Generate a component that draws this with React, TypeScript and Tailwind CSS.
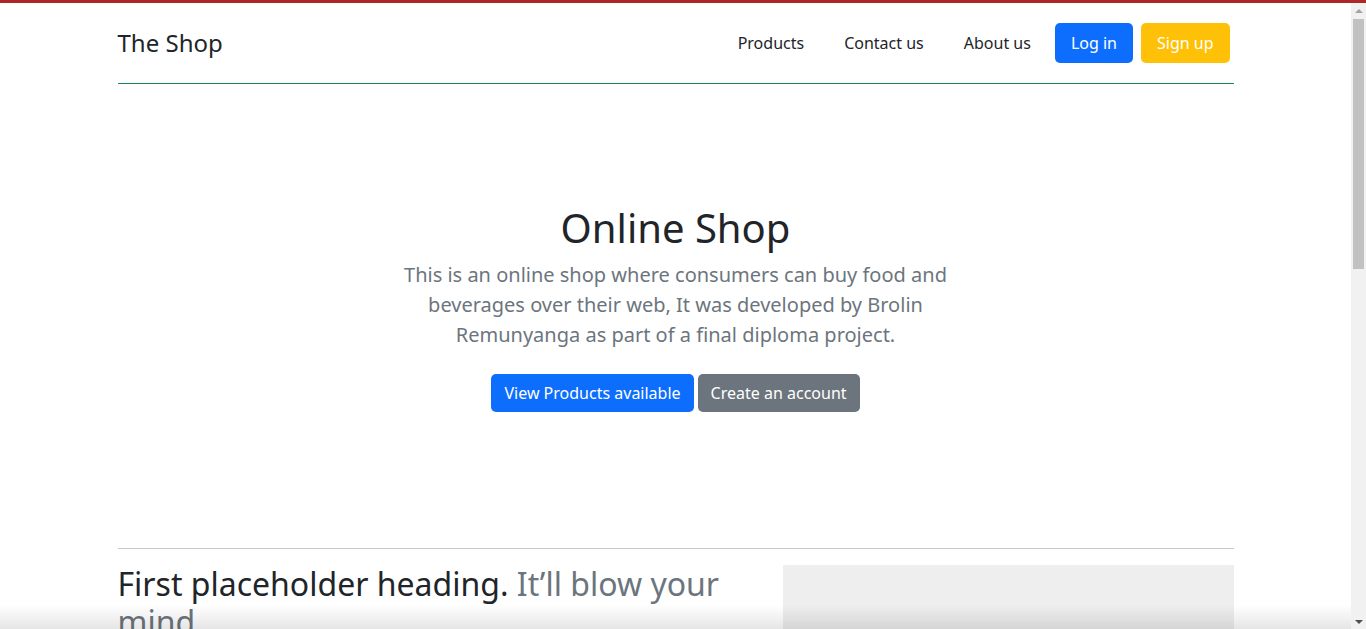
import React from 'react';

const font = { fontFamily: '"Noto Sans", "Liberation Sans", sans-serif' };

function Header() {
  const links = ['Products', 'Contact us', 'About us'];
  return (
    <header className="mx-auto w-[1116px] h-[81px] flex items-center border-b border-[#198754] mb-[119px]">
      <a href="#" className="text-[24px] leading-[36px] text-[#212529]">
        The Shop
      </a>
      <nav className="ml-auto flex items-center">
        {links.map((link) => (
          <a key={link} href="#" className="px-5 text-[16px] leading-6 text-[#212529]">
            {link}
          </a>
        ))}
        <button className="ml-1 h-10 px-4 rounded-[5px] bg-[#0d6efd] text-white text-[16px]">Log in</button>
        <button className="ml-2 mr-1 h-10 px-4 rounded-[5px] bg-[#ffc107] text-white text-[16px]">Sign up</button>
      </nav>
    </header>
  );
}

function Hero() {
  return (
    <section className="text-center">
      <h1 className="text-[40px] leading-[48px] text-[#212529] mb-[9px] pt-[1px]">Online Shop</h1>
      <div className="w-[546px] mx-auto">
        <p className="text-[20px] leading-[30px] text-[#6c757d] mb-[24px] -mt-[1px]">
          This is an online shop where consumers can buy food and beverages over their web, It was developed by Brolin Remunyanga as part of a final diploma project.
        </p>
        <div className="flex justify-center gap-1">
          <button className="h-[38px] px-[13px] rounded-[5px] bg-[#0d6efd] text-white text-[16px]">View Products available</button>
          <button className="h-[38px] px-[13px] rounded-[5px] bg-[#6c757d] text-white text-[16px]">Create an account</button>
        </div>
      </div>
    </section>
  );
}

function Featurette({ title, muted, text }: { title: string; muted: string; text: string }) {
  return (
    <div className="grid grid-cols-[641px_451px] gap-6">
      <div>
        <h2 className="text-[32px] leading-[38px] text-[#212529]">
          {title} <span className="text-[#6c757d]">{muted}</span>
        </h2>
        <p className="mt-4 text-[20px] leading-[30px] text-[#212529]">{text}</p>
      </div>
      <div className="h-[451px] bg-[#eeeeee]" />
    </div>
  );
}

function Scrollbar() {
  return (
    <div className="fixed top-[3px] right-0 bottom-0 w-[15px] bg-[#f1f1f1] flex flex-col items-center">
      <div className="h-[15px] flex items-center justify-center">
        <div className="w-0 h-0 border-l-[4px] border-r-[4px] border-b-[4px] border-l-transparent border-r-transparent border-b-[#a3a3a3]" />
      </div>
      <div className="w-[11px] h-[250px] mt-[1px] bg-[#c1c1c1]" />
      <div className="mt-auto h-[15px] flex items-center justify-center">
        <div className="w-0 h-0 border-l-[4px] border-r-[4px] border-t-[4px] border-l-transparent border-r-transparent border-t-[#505050]" />
      </div>
    </div>
  );
}

export default function App() {
  return (
    <div style={font} className="min-h-screen bg-white text-[#212529]">
      <div className="h-[3px] bg-[#b02525]" />
      <div className="pr-[15px]">
        <Header />
        <Hero />
        <main className="mx-auto w-[1116px] mt-[136px] pb-20">
          <hr className="border-t border-[#c8c9ca] mb-4" />
          <Featurette
            title="First placeholder heading."
            muted="It’ll blow your mind"
            text="Some great placeholder content for the first featurette here. Imagine some exciting prose here."
          />
          <hr className="border-t border-[#c8c9ca] my-20" />
          <Featurette
            title="Oh yeah, it’s that good."
            muted="See for yourself."
            text="Another featurette? Of course. More placeholder content here to give you an idea of how this layout would work with some actual real-world content in place."
          />
        </main>
      </div>
      <div className="fixed bottom-0 left-0 right-[15px] h-6 pointer-events-none bg-gradient-to-b from-transparent to-black/10" />
      <Scrollbar />
    </div>
  );
}
